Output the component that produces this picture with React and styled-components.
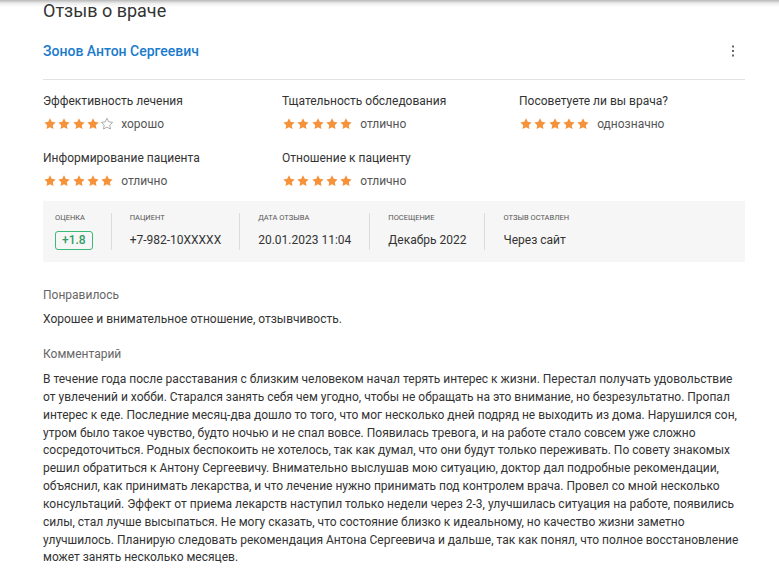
import React from "react";
import styled, { createGlobalStyle } from "styled-components";

const Global = createGlobalStyle`
  html, body { margin: 0; padding: 0; background: #fff; }
  body { font-family: Roboto, "Noto Sans", "Liberation Sans", sans-serif; color: #333; }
`;

const TopShadow = styled.div`
  position: fixed;
  top: 0; left: 0; right: 0;
  height: 7px;
  background: linear-gradient(rgba(0,0,0,0.28), rgba(0,0,0,0.08) 45%, rgba(0,0,0,0));
  pointer-events: none;
`;

const Page = styled.div`
  width: 702px;
  padding: 0 0 20px 43px;
`;

const Title = styled.h1`
  margin: 0;
  font-size: 18px;
  line-height: 22px;
  font-weight: 400;
  color: #333;
`;

const DoctorRow = styled.div`
  display: flex;
  align-items: center;
  justify-content: space-between;
  margin-top: 17px;
  padding-bottom: 16px;
  border-bottom: 1px solid #e2e2e2;
`;

const DoctorName = styled.a`
  font-size: 14px;
  line-height: 24px;
  font-weight: 500;
  color: #1a7bcc;
  text-decoration: none;
`;

const MenuButton = styled.button`
  width: 24px;
  height: 24px;
  padding: 0;
  border: 0;
  background: none;
  display: flex;
  align-items: center;
  justify-content: center;
  color: #666;
`;

const Ratings = styled.div`
  display: grid;
  grid-template-columns: 239px 237px 1fr;
  row-gap: 18px;
  margin-top: 12px;
`;

const Rating = styled.div`
  display: flex;
  flex-direction: column;
`;

const RatingLabel = styled.div`
  font-size: 12px;
  line-height: 18px;
  color: #333;
`;

const StarsRow = styled.div`
  display: flex;
  align-items: center;
  margin-top: 7px;
  height: 14px;
`;

const Stars = styled.div`
  display: flex;
  gap: 0.3px;
  margin-right: 7px;
`;

const RatingText = styled.span`
  font-size: 12px;
  line-height: 14px;
  color: #555;
`;

const InfoBox = styled.div`
  display: flex;
  margin-top: 13px;
  padding: 12px 12px;
  background: #f6f6f6;
`;

const InfoItem = styled.div`
  padding: 0 18px;
  border-left: 1px solid #dcdcdc;
  &:first-child { padding-left: 0; border-left: 0; }
`;

const InfoLabel = styled.div`
  font-size: 7.5px;
  line-height: 10px;
  text-transform: uppercase;
  color: #555;
  margin-bottom: 8px;
  white-space: nowrap;
`;

const InfoValue = styled.div`
  font-size: 12px;
  line-height: 19px;
  color: #333;
  white-space: nowrap;
`;

const Badge = styled.span`
  display: inline-flex;
  align-items: center;
  box-sizing: border-box;
  height: 19px;
  padding: 0 6px;
  border: 1px solid #3cb878;
  border-radius: 3px;
  color: #2f9e62;
  font-size: 12px;
  font-weight: 500;
`;

const SectionTitle = styled.div`
  font-size: 12px;
  line-height: 18px;
  color: #666;
  margin-top: ${(p) => p.$top}px;
`;

const SectionText = styled.p`
  margin: ${(p) => p.$top}px 0 0;
  font-size: 12px;
  line-height: ${(p) => (p.$long ? "17.85px" : "18px")};
  color: #333;
`;

const STAR = "M12 2.2l2.95 6.1 6.65.95-4.8 4.7 1.15 6.65L12 17.45 6.05 20.6l1.15-6.65-4.8-4.7 6.65-.95L12 2.2z";

function Star({ filled }) {
  return (
    <svg width="14" height="14" viewBox="0 0 24 24">
      {filled ? (
        <path d={STAR} fill="#f6923a" />
      ) : (
        <path d={STAR} fill="none" stroke="#9a9a9a" strokeWidth="1.4" strokeLinejoin="round" />
      )}
    </svg>
  );
}

function RatingBlock({ label, value, text }) {
  return (
    <Rating>
      <RatingLabel>{label}</RatingLabel>
      <StarsRow>
        <Stars>
          {[1, 2, 3, 4, 5].map((i) => (
            <Star key={i} filled={i <= value} />
          ))}
        </Stars>
        <RatingText>{text}</RatingText>
      </StarsRow>
    </Rating>
  );
}

const ratings = [
  { label: "Эффективность лечения", value: 4, text: "хорошо" },
  { label: "Тщательность обследования", value: 5, text: "отлично" },
  { label: "Посоветуете ли вы врача?", value: 5, text: "однозначно" },
  { label: "Информирование пациента", value: 5, text: "отлично" },
  { label: "Отношение к пациенту", value: 5, text: "отлично" },
];

const comment =
  "В течение года после расставания с близким человеком начал терять интерес к жизни. Перестал получать удовольствие от увлечений и хобби. Старался занять себя чем угодно, чтобы не обращать на это внимание, но безрезультатно. Пропал интерес к еде. Последние месяц-два дошло то того, что мог несколько дней подряд не выходить из дома. Нарушился сон, утром было такое чувство, будто ночью и не спал вовсе. Появилась тревога, и на работе стало совсем уже сложно сосредоточиться. Родных беспокоить не хотелось, так как думал, что они будут только переживать. По совету знакомых решил обратиться к Антону Сергеевичу. Внимательно выслушав мою ситуацию, доктор дал подробные рекомендации, объяснил, как принимать лекарства, и что лечение нужно принимать под контролем врача. Провел со мной несколько консультаций. Эффект от приема лекарств наступил только недели через 2-3, улучшилась ситуация на работе, появились силы, стал лучше высыпаться. Не могу сказать, что состояние близко к идеальному, но качество жизни заметно улучшилось. Планирую следовать рекомендация Антона Сергеевича и дальше, так как понял, что полное восстановление может занять несколько месяцев.";

export default function App() {
  return (
    <>
      <Global />
      <Page>
        <Title>Отзыв о враче</Title>
        <DoctorRow>
          <DoctorName href="#">Зонов Антон Сергеевич</DoctorName>
          <MenuButton aria-label="menu">
            <svg width="4" height="14" viewBox="0 0 4 14">
              <rect x="1" y="1.5" width="2" height="2" fill="#666" />
              <rect x="1" y="6" width="2" height="2" fill="#666" />
              <rect x="1" y="10.5" width="2" height="2" fill="#666" />
            </svg>
          </MenuButton>
        </DoctorRow>
        <Ratings>
          {ratings.map((r) => (
            <RatingBlock key={r.label} {...r} />
          ))}
        </Ratings>
        <InfoBox>
          <InfoItem>
            <InfoLabel>Оценка</InfoLabel>
            <InfoValue>
              <Badge>+1.8</Badge>
            </InfoValue>
          </InfoItem>
          <InfoItem>
            <InfoLabel>Пациент</InfoLabel>
            <InfoValue>+7-982-10XXXXX</InfoValue>
          </InfoItem>
          <InfoItem>
            <InfoLabel>Дата отзыва</InfoLabel>
            <InfoValue>20.01.2023 11:04</InfoValue>
          </InfoItem>
          <InfoItem>
            <InfoLabel>Посещение</InfoLabel>
            <InfoValue>Декабрь 2022</InfoValue>
          </InfoItem>
          <InfoItem>
            <InfoLabel>Отзыв оставлен</InfoLabel>
            <InfoValue>Через сайт</InfoValue>
          </InfoItem>
        </InfoBox>
        <SectionTitle $top={24}>Понравилось</SectionTitle>
        <SectionText $top={6}>Хорошее и внимательное отношение, отзывчивость.</SectionText>
        <SectionTitle $top={17}>Комментарий</SectionTitle>
        <SectionText $top={8} $long>{comment}</SectionText>
      </Page>
      <TopShadow />
    </>
  );
}
